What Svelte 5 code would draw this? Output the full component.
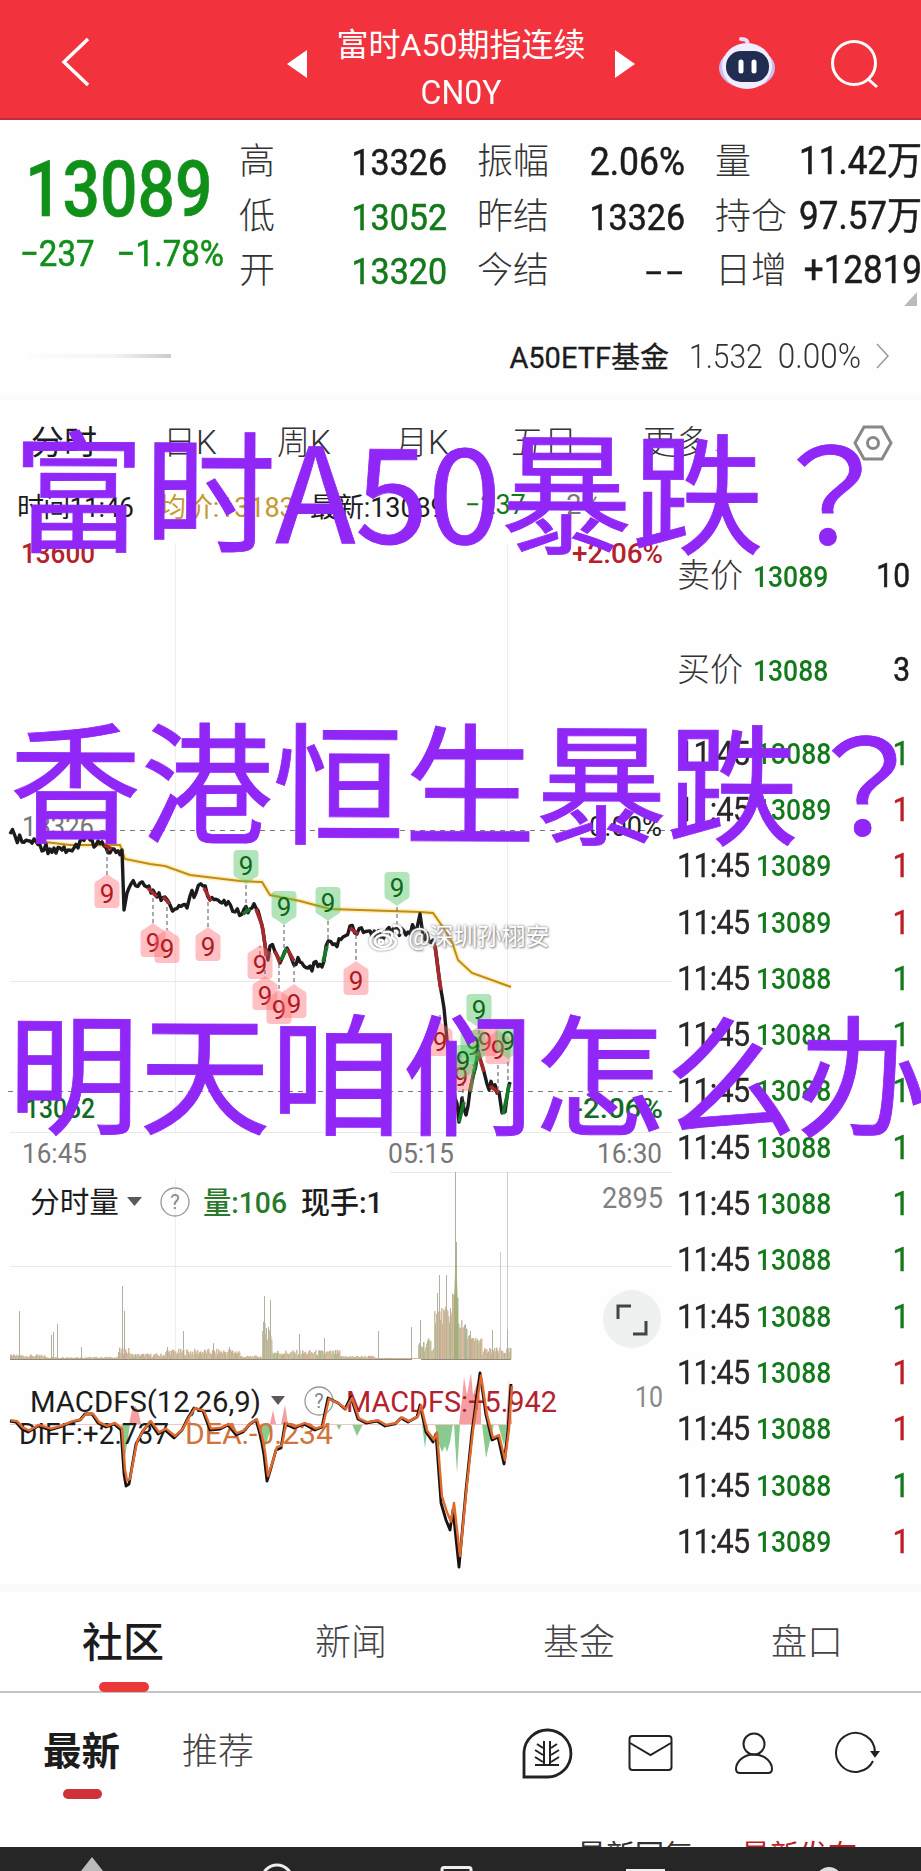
<script>
  const quotes = [
    [['高', '13326', ''], ['低', '13052', 'down'], ['开', '13320', 'down']],
    [['振幅', '2.06%', ''], ['昨结', '13326', ''], ['今结', '--', 'empty']],
    [['量', '11.42万', ''], ['持仓', '97.57万', ''], ['日增', '+12819', '']]
  ];

  const periods = ['分时', '日K', '周K', '月K', '五日', '更多'];
  const sections = ['社区', '新闻', '基金', '盘口'];

  const ticks = [
    [13088, 'down'], [13089, 'up'], [13089, 'up'], [13089, 'up'], [13088, 'down'],
    [13088, 'down'], [13088, 'down'], [13088, 'down'], [13088, 'down'], [13088, 'down'],
    [13088, 'down'], [13088, 'up'], [13088, 'up'], [13088, 'down'], [13089, 'up']
  ];

  // x, baseline, width, size, colour, text
  const labels = [
    [21, 563, 74, 28, '#b3222c', '13600', 500],
    [572, 563, 91, 28, '#b3222c', '+2.06%', 500],
    [22, 836, 72, 27, '#777', '13326', 400],
    [589, 836, 73, 27, '#222', '0.00%', 400],
    [25, 1118, 70, 28, '#126b25', '13052', 500],
    [573, 1118, 90, 28, '#126b25', '-2.06%', 500],
    [22, 1163, 65, 28, '#777', '16:45', 400],
    [388, 1163, 66, 28, '#777', '05:15', 400],
    [597, 1163, 65, 28, '#777', '16:30', 400],
    [30, 1213, 89, 29, '#1c1c1c', '分时量', 400],
    [203, 1213, 84, 30, '#2b7a2b', '量:106', 500],
    [301, 1213, 82, 30, '#1c1c1c', '现手:1', 500],
    [602, 1208, 61, 30, '#808080', '2895', 400],
    [30, 1412, 231, 30, '#1c1c1c', 'MACDFS(12,26,9)', 400],
    [346, 1412, 211, 30, '#b3222c', 'MACDFS:+5.942', 400],
    [635, 1407, 28, 30, '#888', '10', 400],
    [19, 1444, 150, 29, '#1c1c1c', 'DIFF:+2.737', 400],
    [185, 1444, 148, 29, '#d0743c', 'DEA:-0.234', 400]
  ];

  const price = [
    [10, 834], [15, 836], [22, 842], [30, 841], [40, 845], [50, 849], [60, 848], [68, 850], [78, 848], [80, 841],
    [90, 840], [104, 846], [112, 849], [122, 850], [124, 910], [127, 893], [131, 884], [140, 883], [147, 887],
    [151, 893], [157, 897], [165, 897], [170, 905], [175, 909], [187, 908], [190, 896], [196, 893], [203, 886],
    [210, 900], [220, 902], [226, 905], [235, 912], [242, 914], [250, 909], [256, 908], [260, 918], [263, 930],
    [265, 945], [268, 960], [270, 946], [275, 952], [280, 963], [287, 948], [292, 960], [300, 962], [310, 966],
    [322, 967], [326, 946], [335, 944], [343, 937], [350, 926], [357, 934], [370, 931], [385, 935], [395, 930],
    [408, 932], [417, 928], [420, 914], [423, 935], [433, 940], [437, 960], [440, 985], [444, 1008], [447, 1040],
    [453, 1080], [459, 1122], [462, 1098], [466, 1115], [470, 1090], [473, 1076], [478, 1050], [483, 1068],
    [487, 1084], [493, 1088], [499, 1092], [502, 1113], [505, 1112], [508, 1090], [510, 1082]
  ];
  const upMoves = [[[243, 914], [250, 909]], [[281, 960], [287, 948]], [[323, 962], [327, 946]], [[459, 1122], [464, 1102]], [[470, 1092], [478, 1052]], [[503, 1114], [507, 1096], [509, 1084]]];
  const downMoves = [[[104, 845], [112, 849]], [[148, 888], [157, 897]], [[163, 897], [170, 904]], [[204, 888], [211, 901]], [[256, 909], [262, 925], [265, 945], [266, 956]], [[275, 951], [280, 963]], [[288, 950], [294, 961]], [[350, 928], [358, 934]], [[435, 945], [438, 970], [441, 990]], [[479, 1056], [484, 1072]], [[490, 1086], [499, 1093]]];
  const average = '45,842 70,845 120,845 125,859 150,864 165,866 190,875 240,881 262,882 270,895 300,901 330,909 420,912 433,913 445,930 452,942 458,960 472,973 500,983 511,987';

  // centre x, centre y, end of the stem
  const sell = [[107, 893, 850], [153, 942, 898], [167, 948, 900], [208, 946, 902], [260, 964, 955], [265, 995, 970], [279, 1009, 964], [294, 1003, 964], [356, 980, 935], [440, 1041, 1015], [461, 1076, 1055], [485, 1041, 1025], [498, 1049, 1090]];
  const buy = [[246, 866, 910], [284, 907, 948], [328, 903, 946], [397, 888, 925], [479, 1010, 1048], [473, 1046, 1080], [463, 1061, 1100], [508, 1041, 1080]];

  const noise = i => {
    const v = Math.sin(i * 12.9898) * 43758.5453;
    return v - Math.floor(v);
  };

  const jagged = points => {
    const out = [];
    let n = 0;
    points.forEach(([x, y], i) => {
      out.push(`${x},${y}`);
      const next = points[i + 1];
      if (!next) return;
      const steps = Math.floor((next[0] - x) / 2);
      for (let s = 1; s < steps; s++) {
        const k = s / steps;
        out.push(`${x + (next[0] - x) * k},${(y + (next[1] - y) * k + (noise(n++) - 0.5) * 11).toFixed(1)}`);
      }
    });
    return out.join(' ');
  };
  const pts = list => list.map(p => p.join(',')).join(' ');

  const spikes = {
    19: 1311, 51: 1335, 53: 1332, 57: 1324, 81: 1347, 122: 1286, 124: 1311, 167: 1347, 183: 1331,
    213: 1343, 229: 1347, 264: 1296, 266: 1328, 268: 1327, 270: 1300, 299: 1334, 324: 1338, 378: 1331, 411: 1327,
    420: 1320, 437: 1293, 439: 1275, 446: 1275, 450: 1308, 455: 1172, 456: 1242, 465: 1324, 470: 1331, 492: 1330,
    500: 1252, 507: 1329
  };
  const envelope = x => {
    if (x < 45) return 4;
    if (x < 118) return 2;
    if (x < 130) return 10;
    if (x < 165) return 5;
    if (x < 240) return 9;
    if (x < 262) return 3;
    if (x < 272) return 33;
    if (x < 340) return 8;
    if (x < 375) return 3;
    if (x < 418) return 1;
    if (x < 434) return 18;
    if (x < 452) return 50;
    if (x < 458) return 68;
    if (x < 470) return 42 - (x - 458) * 1.5;
    if (x < 482) return 21;
    return 10;
  };
  const volume = [];
  for (let x = 10; x < 511; x += 1) {
    const h = Math.max(1, envelope(x) * (x > 433 && x < 482 ? 0.7 + noise(x) * 0.35 : 0.4 + noise(x) * 0.75));
    volume.push({ x, h, fill: noise(x * 3) > 0.72 ? '#d3ac98' : noise(x * 5) > 0.75 ? '#b0b994' : '#cdbd9a' });
  }

  const diff = [[10, 1421], [16, 1422], [22, 1429], [28, 1432], [38, 1426], [50, 1430], [60, 1427], [72, 1422], [80, 1420], [85, 1414], [92, 1414], [98, 1423], [106, 1427], [114, 1424], [121, 1430], [124, 1474], [126, 1486], [129, 1484], [136, 1444], [143, 1431], [150, 1422], [158, 1434], [165, 1430], [174, 1438], [182, 1430], [188, 1418], [194, 1408], [203, 1411], [210, 1430], [220, 1429], [228, 1425], [236, 1435], [243, 1432], [250, 1424], [256, 1420], [261, 1438], [264, 1455], [267, 1481], [271, 1468], [276, 1450], [281, 1448], [285, 1424], [294, 1428], [304, 1424], [315, 1430], [322, 1427], [328, 1398], [338, 1403], [345, 1409], [351, 1397], [358, 1419], [366, 1423], [377, 1421], [385, 1426], [395, 1424], [401, 1418], [408, 1422], [417, 1417], [420, 1405], [426, 1432], [433, 1442], [436, 1434], [441, 1503], [446, 1520], [450, 1530], [453, 1510], [459, 1567], [466, 1490], [472, 1432], [480, 1373], [486, 1415], [492, 1440], [498, 1437], [504, 1464], [508, 1430], [511, 1384]];
  const dea = diff.map(([x, y]) => [x + 1, 1424 + (y - 1424) * 0.93 - 1]);
</script>

<div class="screen">
  <header>
    <svg class="back" viewBox="0 0 30 52"><path d="M28 3 4 26l24 23" /></svg>
    <svg class="arrow prev" viewBox="0 0 20 28"><path d="M20 0v28L0 14z" /></svg>
    <div class="title">
      <div>富时A50期指连续</div>
      <div class="code">CN0Y</div>
    </div>
    <svg class="arrow next" viewBox="0 0 20 28"><path d="M0 0v28l20-14z" /></svg>
    <svg class="robot" viewBox="0 0 58 56">
      <path d="M29 11c2-6-2-7-6-7" fill="none" stroke="#e7defa" stroke-width="4" stroke-linecap="round" />
      <ellipse cx="29" cy="33" rx="28" ry="20" fill="#c9bdf2" />
      <ellipse cx="29" cy="31" rx="25" ry="23" fill="#f1edff" />
      <rect x="8" y="16" width="43" height="31" rx="15" fill="#202c50" />
      <path d="M23 27v9M36 27v9" stroke="#fff" stroke-width="5" stroke-linecap="round" />
    </svg>
    <svg class="search" viewBox="0 0 50 52"><circle cx="24" cy="24" r="21.5" /><path d="m38 40 9 8" /></svg>
  </header>

  <section class="quote">
    <div class="last">
      <div class="big num">13089</div>
      <div class="change"><span class="num">−237</span><span class="num">−1.78%</span></div>
    </div>
    {#each quotes as column}
      <dl>
        {#each column as [name, value, dir]}
          <div><dt>{name}</dt><dd class="num {dir}">{value}</dd></div>
        {/each}
      </dl>
    {/each}
    <i class="corner"></i>
  </section>

  <section class="fund">
    <i class="smudge"></i>
    <b>A50ETF基金</b>
    <span class="num">1.532</span>
    <span class="num">0.00%</span>
    <svg viewBox="0 0 14 26"><path d="m1 1 11 12L1 25" /></svg>
  </section>

  <nav class="periods">
    {#each periods as period, i}
      <span class:active={i === 0}>{period}</span>
    {/each}
    <i class="more"></i>
    <svg viewBox="0 0 40 36"><path d="M11 2h18l9 16-9 16H11L2 18z" /><circle cx="20" cy="18" r="5.5" /></svg>
  </nav>

  <div class="summary">
    <span>时间11:46</span>
    <span class="avg">均价:13183</span>
    <span>最新:13089</span>
    <span class="down">−237</span>
    <span class="pct">−2%</span>
  </div>

  <main>
    <svg class="chart" viewBox="0 529 672 1055">
      <g stroke="#e3e3e3" fill="none">
        <path d="M175.500 545V1132M507.500 545V1132M175.500 1180V1359" stroke="#eee" />
        <path d="M672.500 545V1575" stroke="#f0f0f0" />
        <path d="M10 981.500H672M10 1132.500H672M10 1266.500H672M390 1172.500H672" stroke="#e9e9e9" />
        <path d="M507.500 1172V1359" stroke="#ccc" />
      </g>
      <path d="M100 830.500H672M8 1091.500H672" stroke="#777" stroke-dasharray="5 5" fill="none" />

      {#each labels.slice(0, 13) as [x, y, w, size, fill, text, weight]}
        <text {x} {y} {fill} font-size={size} font-weight={weight} textLength={w} lengthAdjust="spacingAndGlyphs">{text}</text>
      {/each}

      <polyline points={average} fill="none" stroke="#fff0b8" stroke-width="5" />
      <polyline points={average} fill="none" stroke="#c08a1c" stroke-width="2" />
      <polyline points={jagged(price)} fill="none" stroke="#1d1a1c" stroke-width="3.400" stroke-linejoin="round" />
      {#each downMoves as move}
        <polyline points={pts(move)} fill="none" stroke="#a5282c" stroke-width="3.600" />
      {/each}
      {#each upMoves as move}
        <polyline points={pts(move)} fill="none" stroke="#157a26" stroke-width="3.600" />
      {/each}

      {#each sell as [x, y, end]}
        <path d="M{x} {end}V{end > y ? y + 14 : y - 18}" stroke="#555" stroke-dasharray="4 3" />
        <path d="M{x - 12.5} {y - 8}q0-4 4-5l8.500-6 8.500 6q4 1 4 5v19q0 4-4 4h-17q-4 0-4-4z" fill="#ff6b70" fill-opacity=".42" />
        <text {x} y={y + 10} text-anchor="middle" font-size="26" fill="#b01924">9</text>
      {/each}
      {#each buy as [x, y, end]}
        <path d="M{x} {end}V{y + 18}" stroke="#555" stroke-dasharray="4 3" />
        <path d="M{x - 12.5} {y - 12}q0-4 4-4h17q4 0 4 4v19q0 4-4 5l-8.500 6-8.500-6q-4-1-4-5z" fill="#52c463" fill-opacity=".44" />
        <text {x} y={y + 9} text-anchor="middle" font-size="26" fill="#0a6a1a">9</text>
      {/each}

      <path d="M127 1197h15l-7.500 9zM271 1396h14l-7 9z" fill="#5d585d" />
      <g fill="none" stroke="#999" stroke-width="1.300">
        <circle cx="175" cy="1202" r="14" />
        <circle cx="319" cy="1401" r="14" />
      </g>
      <text x="175" y="1209" text-anchor="middle" font-size="20" fill="#888">?</text>
      <text x="319" y="1408" text-anchor="middle" font-size="20" fill="#888">?</text>

      {#each volume as bar}
        <rect x={bar.x} y={1359 - bar.h} width="1.500" height={bar.h} fill={bar.fill} />
      {/each}
      {#each Object.entries(spikes) as [x, y]}
        <path d="M{+x + 0.5} {y}V1359" stroke={+x === 500 ? '#cccccc' : '#b3b19e'} />
      {/each}
      <path d="M454 1359V1300L456 1250 458 1310V1359z" fill="#a3b07c" />
      <path d="M10 1359.500H412M421 1359.500H511" stroke="#8f8c7c" />

      <circle cx="632" cy="1319" r="29" fill="#eff0f0" />
      <path d="M618 1319v-13h13M646 1321v13h-13" fill="none" stroke="#444" stroke-width="3" />

      <path d="M129 1424 132 1410 135 1406 138 1410 141 1424zM184 1424l5-6 3 6zM270 1424l3-14 3 14zM281 1424l4-19 3 19zM459 1424l3-25 2-22 3 18 4-22 2 22 4-12 4 20v21zM506 1424l3-45 3 45z" fill="#f27d83" fill-opacity=".75" />
      <path d="M121 1424l4 34 5-34zM259 1424l6 24 7-24zM336 1424l3 6 3-6zM352 1424l5 12 6-12zM422 1424l3 24 3-24zM435 1424l4 20 3 8 3-6 2 6 3-10 3-18zM454 1424l3 49 3-49zM482 1424l4 34 8-34zM498 1424l6 22 4-22z" fill="#62b968" fill-opacity=".75" />
      <path d="M10 1424.500H511" stroke="#f1c5c1" stroke-width="1" />
      {#each labels.slice(13) as [x, y, w, size, fill, text, weight]}
        <text {x} {y} {fill} font-size={size} font-weight={weight} textLength={w} lengthAdjust="spacingAndGlyphs">{text}</text>
      {/each}
      <polyline points={pts(diff)} fill="none" stroke="#1a1212" stroke-width="2.800" stroke-linejoin="round" />
      <polyline points={pts(dea)} fill="none" stroke="#e2692c" stroke-width="2.400" stroke-linejoin="round" />
    </svg>

    <aside>
      <div class="level"><span>卖价</span><b class="num down">13089</b><em class="num">10</em></div>
      <div class="level"><span>买价</span><b class="num down">13088</b><em class="num">3</em></div>
      <div class="ticks">
        {#each ticks as [value, dir]}
          <div><span class="num">11:45</span><b class="num down">{value}</b><em class="num {dir}">1</em></div>
        {/each}
      </div>
    </aside>
  </main>

  <nav class="sections">
    {#each sections as section, i}
      <span class:active={i === 0}>{section}</span>
    {/each}
  </nav>

  <section class="feed">
    <div class="filters">
      <span class="active">最新</span>
      <span>推荐</span>
      <div class="tools">
        <svg width="50" height="52" viewBox="0 0 50 52">
          <path d="M2 50V25A23.500 23.500 0 1 1 25.500 50z" stroke-width="2.800" />
          <path d="M13 38h24M22 14v24M28 14v24M21 21l-6-4M21 28l-8-5M21 35l-8-5M29 21l6-4M29 28l8-5M29 35l8-5" />
        </svg>
        <svg width="45" height="38" viewBox="0 0 45 38"><rect x="1.500" y="2" width="42" height="34" rx="3" /><path d="m2 9 20.500 12L43 9" /></svg>
        <svg width="40" height="42" viewBox="0 0 40 42"><circle cx="20" cy="12" r="10.500" /><path d="M20 22.500C8 22.500 2 31 2 37q0 4 4 4h28q4 0 4-4c0-6-6-14.500-18-14.500" /></svg>
        <svg width="44" height="42" viewBox="0 0 44 42"><path d="M38 29A19.500 19.500 0 1 1 40 20" /><path d="M37 20h6l-3 4z" fill="#222" /></svg>
      </div>
    </div>
    <div class="sort"><span>最新回复</span><span class="up">最新发布</span></div>
  </section>

  <footer>
    <svg viewBox="0 0 921 24">
      <path d="M92 10 103 24H81z" fill="#bbb" />
      <g fill="none" stroke="#eee" stroke-width="3">
        <circle cx="277" cy="33" r="15" />
        <rect x="442" y="20.500" width="29" height="20" rx="2" />
        <path d="M626 23.500h39" />
      </g>
      <circle cx="829" cy="33" r="13" fill="#ddd" />
    </svg>
  </footer>

  <div class="watermark">
    <svg viewBox="0 0 36 28">
      <path d="M15 7C5 9-1 17 4 23s23 4 24-4c0-4-5-3-4-6 1-5-5-5-9-3" />
      <ellipse cx="15" cy="18" rx="8" ry="6" /><circle cx="13" cy="19" r="2" /><path d="M25 3c6-2 10 3 8 8M26 8c3-1 4 1 3 3" />
    </svg>
    @深圳孙栩安
  </div>

  <div class="caption">
    <p>富时A50暴跌<span>？</span></p>
    <p>香港恒生暴跌<span>？</span></p>
    <p>明天咱们怎么办</p>
  </div>
</div>

<style>
:global(body) {
  background: #fefefe;
}

.screen {
  position: relative;
  width: 921px;
  height: 1871px;
  overflow: hidden;
  color: #1c1c1c;
  background: #fefefe;
  font-family: Roboto, "Noto Sans CJK SC", sans-serif;
}

.num {
  display: inline-block;
  transform: scaleY(1.1);
  white-space: nowrap;
}

.down { color: #137a1b; }
.up { color: #bd1e25; }

header {
  display: flex;
  align-items: center;
  box-sizing: border-box;
  height: 120px;
  padding-left: 60px;
  background: #f2323c;
  border-bottom: 2px solid #c52c3a;
  color: #fff;
}

header svg { flex: none; fill: none; stroke: #fff; stroke-width: 3.5; }
header .back { width: 30px; height: 52px; margin-top: 5px; }
header .arrow { width: 20px; height: 28px; fill: #fff; stroke: none; margin-top: 9px; }
header .prev { margin-left: 197px; }
header .robot { width: 58px; height: 56px; stroke: none; margin: 7px 0 0 83px; }
header .search { width: 50px; height: 52px; margin: 11px 0 0 54px; stroke-width: 3; }

.title {
  width: 308px;
  font-size: 32px;
  line-height: 47px;
  text-align: center;
  white-space: nowrap;
  padding-top: 20px;
}

.code { font-size: 32px; transform: scaleY(1.05); }

.quote {
  position: relative;
  display: grid;
  grid-template-columns: 209px 207px 207px 207px;
  column-gap: 31px;
  height: 210px;
  box-sizing: border-box;
  padding-top: 15px;
}

.last { color: #109018; padding-left: 25px; }

.big {
  font-size: 66px;
  line-height: 76px;
  font-weight: 500;
  margin-top: 17px;
  transform: scaleY(1.17);
  -webkit-text-stroke: 0.5px;
}

.change {
  display: flex;
  gap: 22px;
  margin: 4px 0 0 -5px;
  font-size: 33px;
  line-height: 44px;
  -webkit-text-stroke: 0.5px;
}

dl { margin: 0; }
dl div { display: flex; justify-content: space-between; height: 54.5px; line-height: 54.5px; }
dt { font-size: 36px; font-weight: 300; color: #333; margin-left: -1px; white-space: nowrap; }
dd { margin: 0; font-size: 34px; white-space: nowrap; -webkit-text-stroke: 0.5px; }
dl:nth-of-type(2) div:first-child dd { font-size: 35.5px; }
dl:nth-of-type(3) dd { font-size: 35px; margin-right: 1px; }
dd.empty { transform: scaleX(1.7); transform-origin: right; letter-spacing: 3px; margin-right: -3px; }

.corner {
  position: absolute;
  right: 4px;
  bottom: 24px;
  border-left: 13px solid transparent;
  border-bottom: 14px solid #bbb;
}

.fund {
  display: flex;
  align-items: center;
  height: 52px;
  padding: 0 31px 0 28px;
  font-size: 30px;
  color: #333;
}

.fund b { font-weight: 400; font-size: 29px; color: #1c1c1c; margin: -3px 20px 0 auto; -webkit-text-stroke: 0.3px; }
.fund .num { margin-right: 15px; font-weight: 300; }
.fund .num:nth-of-type(2) { font-size: 31.5px; }
.fund svg { width: 14px; height: 26px; fill: none; stroke: #999; stroke-width: 1.5; }

.smudge {
  width: 143px;
  height: 4px;
  background: linear-gradient(90deg, #fcfcfc, #f4f4f4 60%, #ccc);
}

.periods {
  display: flex;
  align-items: center;
  height: 76px;
  margin-top: 14px;
  padding: 0 29px;
  border-top: 4px solid #fbfbfb;
  box-sizing: border-box;
  font-size: 33px;
  font-weight: 300;
  color: #333;
}

.periods span { position: relative; width: 116px; height: 44px; line-height: 44px; margin-top: 14px; white-space: nowrap; }
.periods span:first-child { width: 134px; padding-left: 2px; box-sizing: border-box; }
.periods span:nth-child(2) { width: 114px; }
.periods span:nth-child(3) { width: 118px; }
.periods span:nth-child(5) { width: 132px; }
.periods span:nth-child(6) { width: 72px; }
.periods .active { color: #1c1c1c; font-weight: 400; }
.periods .active::after { content: ""; position: absolute; left: 22px; bottom: -15px; width: 28px; height: 6px; background: #d42440; }
.periods .more { border-left: 12px solid transparent; border-bottom: 12px solid #999; margin-top: 18px; }
.periods svg { width: 40px; height: 36px; margin: 13px -1px 0 auto; fill: none; stroke: #888; stroke-width: 3; }

.summary {
  display: flex;
  height: 57px;
  align-items: center;
  padding: 9px 0 0 17px;
  box-sizing: border-box;
  font-size: 27px;
  letter-spacing: -0.1px;
  white-space: nowrap;
}

.summary span { width: 155px; }
.summary span:first-child { width: 142px; letter-spacing: -0.7px; }
.summary span:nth-child(2) { width: 151px; }
.summary .down { width: 86px; }
.summary .avg { color: #c29a2e; }
.summary .pct { color: #777; }

main { display: flex; height: 1055px; }

.chart { flex: none; width: 672px; height: 1055px; }

aside { flex: 1; padding: 0 11px 0 5px; }
aside b { font-weight: 500; font-size: 26.5px; }
aside em { font-style: normal; font-size: 31px; margin-left: auto; }

.level { display: flex; align-items: center; height: 94px; }
.level span { width: 76px; font-size: 33px; font-weight: 300; color: #333; margin-top: -6px; }
.level em { font-size: 30px; -webkit-text-stroke: 0.5px; margin-top: -2px; }

.ticks { padding: 8px 0 0; }
.ticks div { display: flex; align-items: center; height: 56.3px; }
.ticks span { width: 79px; font-size: 31px; letter-spacing: -1px; color: #2b2629; -webkit-text-stroke: 0.3px; }
.ticks em { -webkit-text-stroke: 0.4px; }

.sections {
  display: grid;
  grid-template-columns: repeat(4, 228px);
  height: 109px;
  padding-left: 9px;
  box-sizing: border-box;
  border-top: 8px solid #fbfbfb;
  border-bottom: 2px solid #c4c4c4;
  line-height: 102px;
  text-align: center;
  font-size: 36px;
  font-weight: 300;
  color: #444;
}

.sections span { position: relative; }
.sections .active { font-size: 41px; font-weight: 500; color: #1c1c1c; }
.sections .active::after {
  content: "";
  position: absolute;
  left: 90px;
  bottom: 2px;
  width: 50px;
  height: 10px;
  border-radius: 5px;
  background: #e93a38;
}

.feed { height: 154px; overflow: hidden; }

.filters {
  display: flex;
  align-items: center;
  height: 114px;
  padding: 0 42px 0 43px;
  font-size: 36px;
  color: #444;
}

.filters span { position: relative; top: -2px; margin-right: 62px; font-weight: 300; }
.filters .active { font-size: 38.5px; font-weight: 700; color: #1c1c1c; }
.filters .active::after {
  content: "";
  position: absolute;
  left: 20px;
  bottom: -23px;
  width: 39px;
  height: 10px;
  border-radius: 5px;
  background: #cf3339;
}

.tools { display: flex; align-items: center; gap: 61px; margin: 6px 0 0 auto; }
.tools svg { fill: none; stroke: #222; stroke-width: 2; overflow: visible; }
.tools svg:nth-child(2) { margin-left: -5px; }

.sort {
  display: flex;
  gap: 48px;
  margin: 31px 0 0 577px;
  font-size: 29px;
  line-height: 36px;
  color: #333;
}

footer { height: 24px; background: #262626; }
footer svg { display: block; width: 921px; height: 24px; }

.watermark {
  position: absolute;
  left: 368px;
  top: 920px;
  display: flex;
  align-items: center;
  gap: 4px;
  color: #fff;
  font-size: 24px;
  line-height: 34px;
  text-shadow: 0 0 3px #777, 1px 1px 2px #999;
}

.watermark svg { width: 36px; height: 28px; fill: none; stroke: #fff; stroke-width: 2.5; filter: drop-shadow(0 0 1px #777); }

.caption {
  position: absolute;
  left: 10px;
  top: 339px;
  color: #9127f7;
  font-family: "Noto Sans CJK SC", sans-serif;
  font-size: 132px;
  line-height: 291px;
  letter-spacing: -0.5px;
  -webkit-text-stroke: 0.8px;
  white-space: nowrap;
  transform: rotate(0.2deg);
  transform-origin: 0 0;
}

.caption p { margin: 0; height: 291px; }
.caption p:first-child { padding-left: 3px; }
.caption p:nth-child(2) { padding-left: 1px; }
.caption span { font-family: "Noto Sans CJK TC", sans-serif; line-height: 1; }
</style>
